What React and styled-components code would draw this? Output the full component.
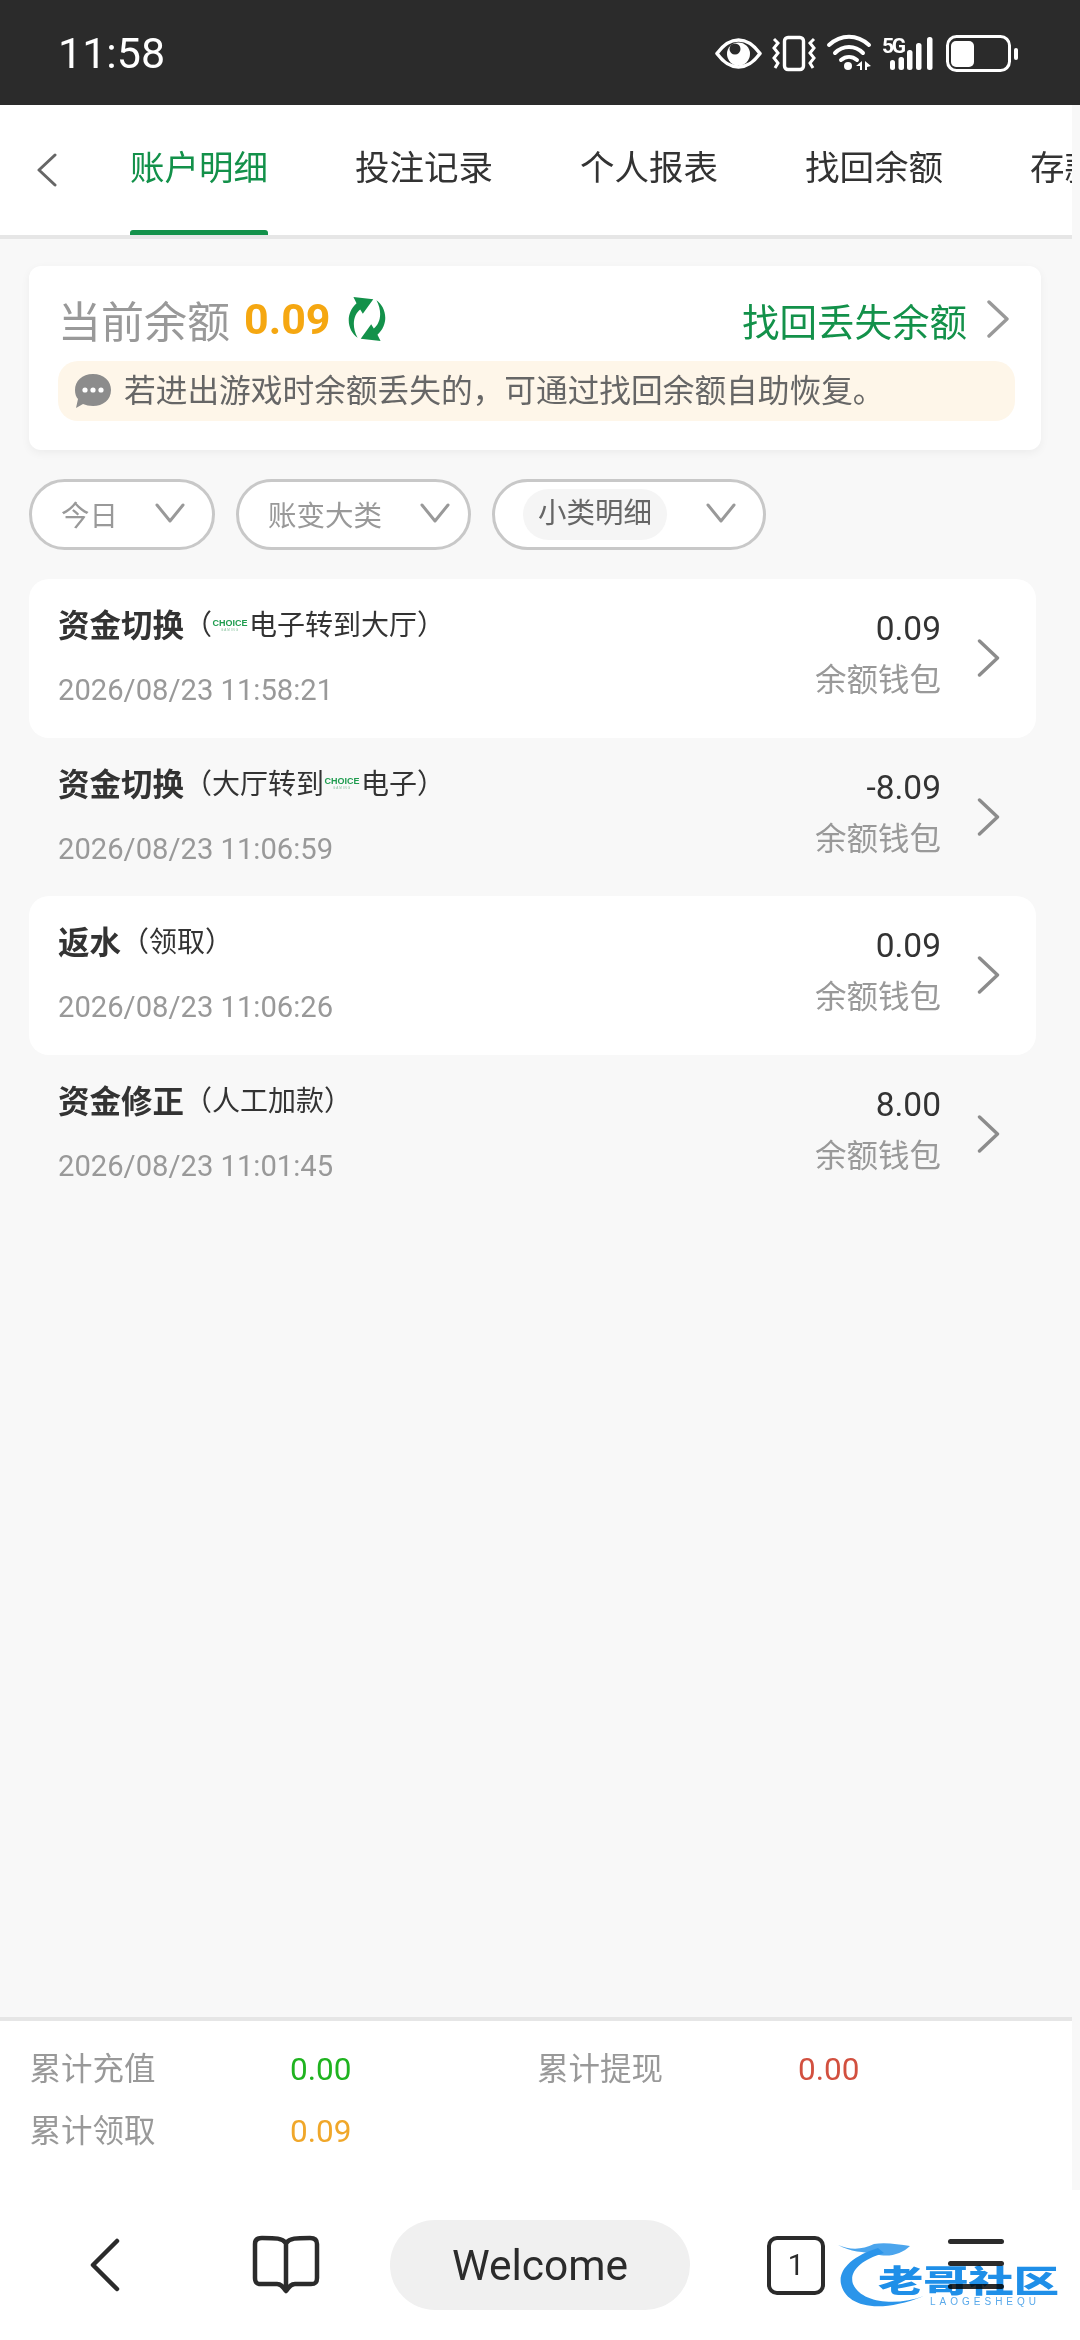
import React from "react";
import styled, { createGlobalStyle } from "styled-components";

const sans = `Roboto, "Noto Sans CJK SC", sans-serif`;

const GlobalStyle = createGlobalStyle`
  html, body {
    margin: 0;
    padding: 0;
    background: #f8f8f8;
    font-family: ${sans};
  }
  * { box-sizing: border-box; }
`;

const Page = styled.div`
  position: relative;
  width: 1080px;
  height: 2340px;
  display: flex;
  flex-direction: column;
  overflow: hidden;
  background: #f8f8f8;
`;

const StatusBar = styled.div`
  height: 105px;
  flex: none;
  background: #2b2b2b;
  display: flex;
  align-items: center;
  justify-content: space-between;
  padding: 0 60px 0 58px;
  color: #fff;
`;

const Clock = styled.span`
  font-size: 43px;
`;

const StatusIcons = styled.svg`
  width: 305px;
  height: 40px;
`;

const Content = styled.div`
  flex: 1;
  display: flex;
  flex-direction: column;
  margin-right: 8px;
  min-height: 0;
`;

const TabBar = styled.div`
  height: 134px;
  flex: none;
  display: flex;
  align-items: stretch;
  background: #fff;
  border-bottom: 4px solid #e6e6e6;
  overflow: hidden;
  padding-left: 36px;
`;

const TabBack = styled.svg`
  width: 22px;
  height: 34px;
  flex: none;
  align-self: center;
  margin: 0 72px 0 0;
  color: #666;
`;

const Tabs = styled.div`
  display: flex;
  gap: 87px;
`;

const Tab = styled.div`
  position: relative;
  flex: none;
  width: 138px;
  white-space: nowrap;
  font-size: 34.5px;
  line-height: 126px;
  height: 130px;
  color: ${(p) => (p.$active ? "#13914a" : "#333")};
  ${(p) =>
    p.$active &&
    `&::after {
      content: "";
      position: absolute;
      left: 0;
      right: 0;
      bottom: 0;
      height: 5px;
      border-radius: 3px 3px 0 0;
      background: #13914a;
    }`}
`;

const Main = styled.div`
  flex: 1;
  padding: 27px 30px 0 29px;
  display: flex;
  flex-direction: column;
`;

const BalanceCard = styled.div`
  height: 184px;
  background: #fff;
  border-radius: 12px;
  box-shadow: 0 3px 10px rgba(0, 0, 0, 0.05);
  padding: 26px 26px 0 29px;
  margin-right: 1px;
`;

const BalanceTop = styled.div`
  display: flex;
  align-items: center;
  height: 54px;
  margin-bottom: 15px;
`;

const BalanceLabel = styled.span`
  font-size: 43px;
  color: #999;
  margin-right: 14px;
`;

const BalanceValue = styled.span`
  font-size: 43px;
  font-weight: 700;
  color: #f5a711;
  margin-right: 15px;
`;

const RefreshIcon = styled.svg`
  width: 44px;
  height: 46px;
  color: #13914a;
`;

const RecoverLink = styled.div`
  margin: 0 5px 0 auto;
  display: flex;
  align-items: center;
  gap: 19px;
  font-size: 37.5px;
  color: #13914a;
`;

const Chevron = styled.svg`
  width: ${(p) => p.$w || 24}px;
  height: ${(p) => p.$h || 38}px;
  flex: none;
  color: ${(p) => p.$color || "#999"};
`;

const Notice = styled.div`
  height: 60px;
  border-radius: 20px;
  background: #fef6e9;
  display: flex;
  align-items: center;
  padding: 0 0 6px 16px;
  gap: 12px;
  font-size: 31.7px;
  color: #666;
  white-space: nowrap;
`;

const NoticeIcon = styled.svg`
  width: 38px;
  height: 36px;
  flex: none;
  margin-top: 6px;
`;

const Filters = styled.div`
  display: flex;
  gap: 21px;
  margin: 29px 0;
`;

const FilterPill = styled.div`
  width: ${(p) => p.$w}px;
  height: 71px;
  border: 3px solid #c8c8c8;
  border-radius: 36px;
  background: #fff;
  display: flex;
  align-items: center;
  justify-content: space-between;
  padding: 0 ${(p) => p.$pr || 27}px 3px 29px;
  font-size: 28.5px;
  color: #999;
`;

const SelectedFilter = styled.span`
  padding: 0 15px;
  height: 51px;
  line-height: 49px;
  border-radius: 26px;
  background: #f5f5f5;
  color: #666;
  margin: 3px 0 0 -1px;
`;

const Rows = styled.div`
  display: flex;
  flex-direction: column;
  margin-right: 6px;
`;

const Row = styled.div`
  height: 158.5px;
  display: flex;
  align-items: stretch;
  padding: 0 35px 0 29px;
  border-radius: 20px;
  background: ${(p) => (p.$white ? "#fff" : "transparent")};
`;

const RowLeft = styled.div`
  flex: 1;
  padding-top: 21px;
`;

const RowTitle = styled.div`
  height: 46px;
  display: flex;
  align-items: center;
  white-space: nowrap;
  font-size: 28px;
  color: #333;
`;

const RowName = styled.span`
  font-size: 31.5px;
  font-weight: 700;
`;

const RowDate = styled.div`
  margin-top: 24px;
  font-size: 29.2px;
  line-height: 40px;
  color: #999;
`;

const RowRight = styled.div`
  text-align: right;
  padding-top: 27px;
  margin-right: 35px;
`;

const RowAmount = styled.div`
  font-size: 33.5px;
  line-height: 46px;
  color: #333;
`;

const RowWallet = styled.div`
  margin-top: 7px;
  font-size: 31.5px;
  line-height: 44px;
  color: #999;
`;

const RowChevron = styled(Chevron)`
  align-self: center;
`;

const ChoiceMark = styled.span`
  display: inline-flex;
  flex-direction: column;
  align-items: center;
  width: 32px;
  margin: 4px 3px 0 2px;
  color: #1e9c4e;
  font: 700 9px/9px "Liberation Sans", sans-serif;
`;

const ChoiceSub = styled.span`
  font: 400 3px/4px "Liberation Sans", sans-serif;
  letter-spacing: 1px;
  color: #7fbf97;
`;

const Totals = styled.div`
  height: 173px;
  flex: none;
  background: #fff;
  border-top: 4px solid #e6e6e6;
  padding: 29px 0 0 29.5px;
  display: grid;
  grid-template-columns: 260.5px 247px 261px 1fr;
  grid-auto-rows: 62px;
  align-content: start;
  font-size: 31.5px;
`;

const TotalLabel = styled.div`
  line-height: 40px;
  color: #999;
`;

const TotalValue = styled.div`
  line-height: 40px;
  color: ${(p) => p.$color};
`;

const BottomNav = styled.div`
  height: 150px;
  flex: none;
  background: #fff;
  display: flex;
  align-items: center;
  padding: 0 0 0 88px;
  color: #2b2b2b;
`;

const NavIcon = styled.svg`
  flex: none;
  width: ${(p) => p.$w}px;
  height: ${(p) => p.$h}px;
  margin-left: ${(p) => p.$ml || 0}px;
`;

const WelcomePill = styled.div`
  flex: none;
  width: 300px;
  height: 90px;
  margin-left: 70px;
  border-radius: 45px;
  background: #f0f0f0;
  display: flex;
  align-items: center;
  justify-content: center;
  font-size: 42.5px;
  color: #2b2b2b;
`;

const TabCount = styled.div`
  flex: none;
  width: 58px;
  height: 59px;
  margin-left: 77px;
  border: 4.5px solid #2b2b2b;
  border-radius: 10px;
  display: flex;
  align-items: center;
  justify-content: center;
  font-size: 29px;
`;

const Watermark = styled.div`
  position: absolute;
  left: 838px;
  top: 2238px;
  width: 242px;
  height: 84px;
  color: #1f8fe8;
  mix-blend-mode: multiply;
  filter: blur(0.5px);
`;

const WatermarkArt = styled.svg`
  position: absolute;
  left: 0;
  top: 0;
  width: 100px;
  height: 84px;
`;

const WatermarkText = styled.div`
  position: absolute;
  left: 40px;
  top: 23px;
  font-family: "Noto Sans CJK SC", sans-serif;
  font-size: 31px;
  line-height: 36px;
  font-weight: 900;
  white-space: nowrap;
  transform-origin: left top;
  transform: scaleX(1.46);
`;

const WatermarkSub = styled.div`
  position: absolute;
  left: 92px;
  top: 58px;
  font: 500 10px/11px "Liberation Sans", sans-serif;
  letter-spacing: 4px;
  color: #5aa9ea;
  white-space: nowrap;
`;

const ChevronRight = (props) => (
  <Chevron viewBox="0 0 24 38" fill="none" stroke="currentColor" strokeWidth="3.4" strokeLinecap="round" strokeLinejoin="round" {...props}>
    <path d="M3 2 L21 19 L3 36" />
  </Chevron>
);

const ChevronDown = () => (
  <Chevron $w={30} $h={22} viewBox="0 0 30 22" fill="none" stroke="currentColor" strokeWidth="3" strokeLinecap="round" strokeLinejoin="round">
    <path d="M2 3 L15 19 L28 3" />
  </Chevron>
);

const Choice = () => (
  <ChoiceMark>
    CHOICE
    <ChoiceSub>GAMING</ChoiceSub>
  </ChoiceMark>
);

const rows = [
  { name: "资金切换", detail: <>（<Choice />电子转到大厅）</>, date: "2026/08/23 11:58:21", amount: "0.09", white: true },
  { name: "资金切换", detail: <>（大厅转到<Choice />电子）</>, date: "2026/08/23 11:06:59", amount: "-8.09" },
  { name: "返水", detail: "（领取）", date: "2026/08/23 11:06:26", amount: "0.09", white: true },
  { name: "资金修正", detail: "（人工加款）", date: "2026/08/23 11:01:45", amount: "8.00" },
];

const refreshArc = "M8 1 L27 3 L17 17 L14.5 13 C8 18 6 29 12 40 C3 34 -1 18 11 7 Z";

export default function App() {
  return (
    <Page>
      <GlobalStyle />
      <StatusBar>
        <Clock>11:58</Clock>
        <StatusIcons viewBox="0 0 305 40" fill="none">
          {/* eye */}
          <path d="M2 20.5 C9 11 15 7 23.5 7 C32 7 38 11 45 20.5 C38 30 32 34 23.5 34 C15 34 9 30 2 20.5 Z" stroke="#fff" strokeWidth="3.6" strokeLinejoin="round" />
          <circle cx="23.5" cy="21" r="11.5" fill="#fff" />
          <circle cx="20" cy="16" r="5.5" fill="#2b2b2b" />
          {/* vibrate */}
          <rect x="69.5" y="4.5" width="19" height="32" rx="3.5" stroke="#fff" strokeWidth="3.4" />
          <path d="M59 6 L63 10 L59 15 L63 20 L59 25 L63 30 L60 35" stroke="#fff" strokeWidth="3" />
          <path d="M99 6 L95 10 L99 15 L95 20 L99 25 L95 30 L98 35" stroke="#fff" strokeWidth="3" />
          {/* wifi */}
          <path d="M114 12 C126 1 142 1 154 12" stroke="#fff" strokeWidth="4" strokeLinecap="round" />
          <path d="M120 20 C128 12 140 12 148 20" stroke="#fff" strokeWidth="4" strokeLinecap="round" />
          <path d="M126 27 C131 23 137 23 142 27" stroke="#fff" strokeWidth="4" strokeLinecap="round" />
          <circle cx="133" cy="33" r="4" fill="#fff" />
          <path d="M141 33 L147 28 V37 H145 V33 Z M150 28 L156 33 L152 34 V37 H150 Z" fill="#fff" />
          {/* 5G + signal */}
          <text x="167" y="19.5" fill="#fff" fontSize="21" fontWeight="700" fontFamily="Roboto, sans-serif" letterSpacing="-1" textLength="23">5G</text>
          <rect x="175" y="27" width="5" height="10" rx="2.5" fill="#fff" />
          <rect x="183.5" y="24" width="5.5" height="13" rx="2.5" fill="#fff" />
          <rect x="192" y="17" width="5.5" height="20" rx="2.5" fill="#fff" />
          <rect x="201" y="10" width="5.5" height="27" rx="2.5" fill="#fff" />
          <rect x="212" y="4" width="5.5" height="33" rx="2.5" fill="#fff" />
          {/* battery */}
          <rect x="232.5" y="3.5" width="62" height="34" rx="9" stroke="#fff" strokeWidth="3" />
          <rect x="236" y="8" width="23" height="26" rx="5" fill="#fff" />
          <rect x="299" y="15" width="4" height="12" rx="2" fill="#fff" />
        </StatusIcons>
      </StatusBar>

      <Content>
        <TabBar>
          <TabBack viewBox="0 0 22 34" fill="none" stroke="currentColor" strokeWidth="3" strokeLinecap="round" strokeLinejoin="round">
            <path d="M19 2 L3 17 L19 32" />
          </TabBack>
          <Tabs>
            <Tab $active>账户明细</Tab>
            <Tab>投注记录</Tab>
            <Tab>个人报表</Tab>
            <Tab>找回余额</Tab>
            <Tab>存款记录</Tab>
          </Tabs>
        </TabBar>

        <Main>
          <BalanceCard>
            <BalanceTop>
              <BalanceLabel>当前余额</BalanceLabel>
              <BalanceValue>0.09</BalanceValue>
              <RefreshIcon viewBox="0 0 42 44" fill="currentColor">
                <path d={refreshArc} />
                <path d={refreshArc} transform="rotate(180 21 22)" />
              </RefreshIcon>
              <RecoverLink>
                找回丢失余额
                <ChevronRight />
              </RecoverLink>
            </BalanceTop>
            <Notice>
              <NoticeIcon viewBox="0 0 38 36">
                <path d="M19 1 C30 1 37 8 37 17 C37 27 29 33 19 33 C15 33 12 32 9 31 L2 35 L4 26 C2 24 1 21 1 17 C1 8 8 1 19 1 Z" fill="#8c8c8c" />
                <circle cx="11" cy="17" r="2.6" fill="#fff" />
                <circle cx="19" cy="17" r="2.6" fill="#fff" />
                <circle cx="27" cy="17" r="2.6" fill="#fff" />
              </NoticeIcon>
              若进出游戏时余额丢失的，可通过找回余额自助恢复。
            </Notice>
          </BalanceCard>

          <Filters>
            <FilterPill $w={186}>今日<ChevronDown /></FilterPill>
            <FilterPill $w={235} $pr={18}>账变大类<ChevronDown /></FilterPill>
            <FilterPill $w={274}>
              <SelectedFilter>小类明细</SelectedFilter>
              <ChevronDown />
            </FilterPill>
          </Filters>

          <Rows>
            {rows.map((row) => (
              <Row key={row.date} $white={row.white}>
                <RowLeft>
                  <RowTitle>
                    <RowName>{row.name}</RowName>
                    {row.detail}
                  </RowTitle>
                  <RowDate>{row.date}</RowDate>
                </RowLeft>
                <RowRight>
                  <RowAmount>{row.amount}</RowAmount>
                  <RowWallet>余额钱包</RowWallet>
                </RowRight>
                <RowChevron as={ChevronRight} $w={25} $h={38} $color="#8c8c8c" />
              </Row>
            ))}
          </Rows>
        </Main>

        <Totals>
          <TotalLabel>累计充值</TotalLabel>
          <TotalValue $color="#1fb31f">0.00</TotalValue>
          <TotalLabel>累计提现</TotalLabel>
          <TotalValue $color="#d2503f">0.00</TotalValue>
          <TotalLabel>累计领取</TotalLabel>
          <TotalValue $color="#f0a72a">0.09</TotalValue>
        </Totals>
      </Content>

      <BottomNav>
        <NavIcon $w={34} $h={54} viewBox="0 0 34 54" fill="none" stroke="currentColor" strokeWidth="4.5" strokeLinecap="round" strokeLinejoin="round">
          <path d="M29 3 L5 27 L29 51" />
        </NavIcon>
        <NavIcon $w={68} $h={60} $ml={130} viewBox="0 0 68 60" fill="none" stroke="currentColor" strokeWidth="4.5" strokeLinejoin="round" strokeLinecap="round">
          <path d="M34 8 C30 3 24 3 10 3 C5 3 3 5 3 9 V43 C3 48 5 49 9 49 H25 C29 49 31 52 34 56 C37 52 39 49 43 49 H59 C63 49 65 48 65 43 V9 C65 5 63 3 58 3 C44 3 38 3 34 8 Z" />
          <path d="M34 8 V50" />
        </NavIcon>
        <WelcomePill>Welcome</WelcomePill>
        <TabCount>1</TabCount>
        <NavIcon $w={58} $h={52} $ml={122} viewBox="0 0 58 52" fill="currentColor">
          <rect x="1" y="0" width="56" height="5" rx="2.5" />
          <rect x="1" y="22" width="56" height="5" rx="2.5" />
          <rect x="1" y="45" width="56" height="5" rx="2.5" />
        </NavIcon>
      </BottomNav>

      <Watermark>
        <WatermarkArt viewBox="0 0 100 84" fill="none">
          <path d="M40 10 C14 18 0 32 3 46 C7 66 36 78 86 58 C60 68 24 66 15 46 C11 34 22 22 46 15 Z" fill="#2b95ea" />
          <path d="M0 7 C12 12 24 12 36 6 C46 4 60 6 72 8 C64 16 50 20 38 16 C26 14 12 14 0 7 Z" fill="#2b95ea" opacity="0.85" />
        </WatermarkArt>
        <WatermarkText>老哥社区</WatermarkText>
        <WatermarkSub>LAOGESHEQU</WatermarkSub>
      </Watermark>
    </Page>
  );
}
